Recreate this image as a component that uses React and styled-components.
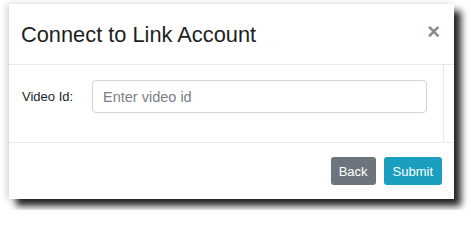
import React from "react";
import styled, { createGlobalStyle } from "styled-components";

const Global = createGlobalStyle`
  html, body { margin: 0; padding: 0; background: #ffffff; }
  body { font-family: "Liberation Sans", Arial, sans-serif; }
  * { box-sizing: border-box; }
`;

const Page = styled.div`
  width: 471px;
  height: 210px;
  padding: 4px 0 0 9px;
  overflow: hidden;
`;

const Modal = styled.div`
  width: 445px;
  height: 195px;
  background: #fff;
  display: flex;
  flex-direction: column;
  box-shadow: -2px 0 7px rgba(0, 0, 0, 0.18), 7px 7px 7px rgba(0, 0, 0, 0.85);
`;

const Header = styled.div`
  height: 61px;
  display: flex;
  align-items: center;
  justify-content: space-between;
  padding: 2px 14px 0 12px;
  border-bottom: 1px solid #e6e8ec;
`;

const Title = styled.h5`
  margin: 0;
  font-family: "Liberation Sans", Arial, sans-serif;
  font-weight: 400;
  font-size: 21.8px;
  color: #1c1f22;
  line-height: 1;
`;

const Close = styled.button`
  border: 0;
  background: none;
  padding: 0;
  font-family: "Liberation Sans", Arial, sans-serif;
  font-size: 22px;
  font-weight: 700;
  color: #8a8a8a;
  line-height: 1;
  cursor: pointer;
  margin-top: -6px;
`;

const Body = styled.div`
  height: 78px;
  display: flex;
  border-bottom: 1px solid #e6e8ec;
`;

const BodyInner = styled.div`
  flex: 1;
  border-right: 1px solid #e6e8ec;
  padding: 15px 16px 0 13px;
`;

const Gutter = styled.div`
  width: 10px;
`;

const Row = styled.div`
  display: flex;
  align-items: center;
`;

const Label = styled.label`
  width: 70px;
  font-size: 13px;
  color: #212529;
`;

const Input = styled.input`
  flex: 1;
  height: 33px;
  border: 1px solid #ced4da;
  border-radius: 4px;
  padding: 0 10px;
  font-family: "Liberation Sans", Arial, sans-serif;
  font-size: 14.5px;
  color: #495057;
  outline: none;
  &::placeholder { color: #7a8087; }
`;

const Footer = styled.div`
  flex: 1;
  display: flex;
  align-items: center;
  justify-content: flex-end;
  gap: 8px;
  padding: 0 12px;
`;

const Button = styled.button`
  height: 28px;
  border: 0;
  border-radius: 3px;
  padding: 0 ${(p) => (p.$wide ? 9 : 8)}px;
  font-family: "Liberation Sans", Arial, sans-serif;
  font-size: 13px;
  color: #fff;
  background: ${(p) => p.$bg};
  cursor: pointer;
`;

export default function App() {
  return (
    <>
      <Global />
      <Page>
        <Modal>
          <Header>
            <Title>Connect to Link Account</Title>
            <Close aria-label="Close">×</Close>
          </Header>
          <Body>
            <BodyInner>
              <Row>
                <Label>Video Id:</Label>
                <Input placeholder="Enter video id" />
              </Row>
            </BodyInner>
            <Gutter />
          </Body>
          <Footer>
            <Button $bg="#6c757d">Back</Button>
            <Button $bg="#1b9fc0" $wide>Submit</Button>
          </Footer>
        </Modal>
      </Page>
    </>
  );
}
